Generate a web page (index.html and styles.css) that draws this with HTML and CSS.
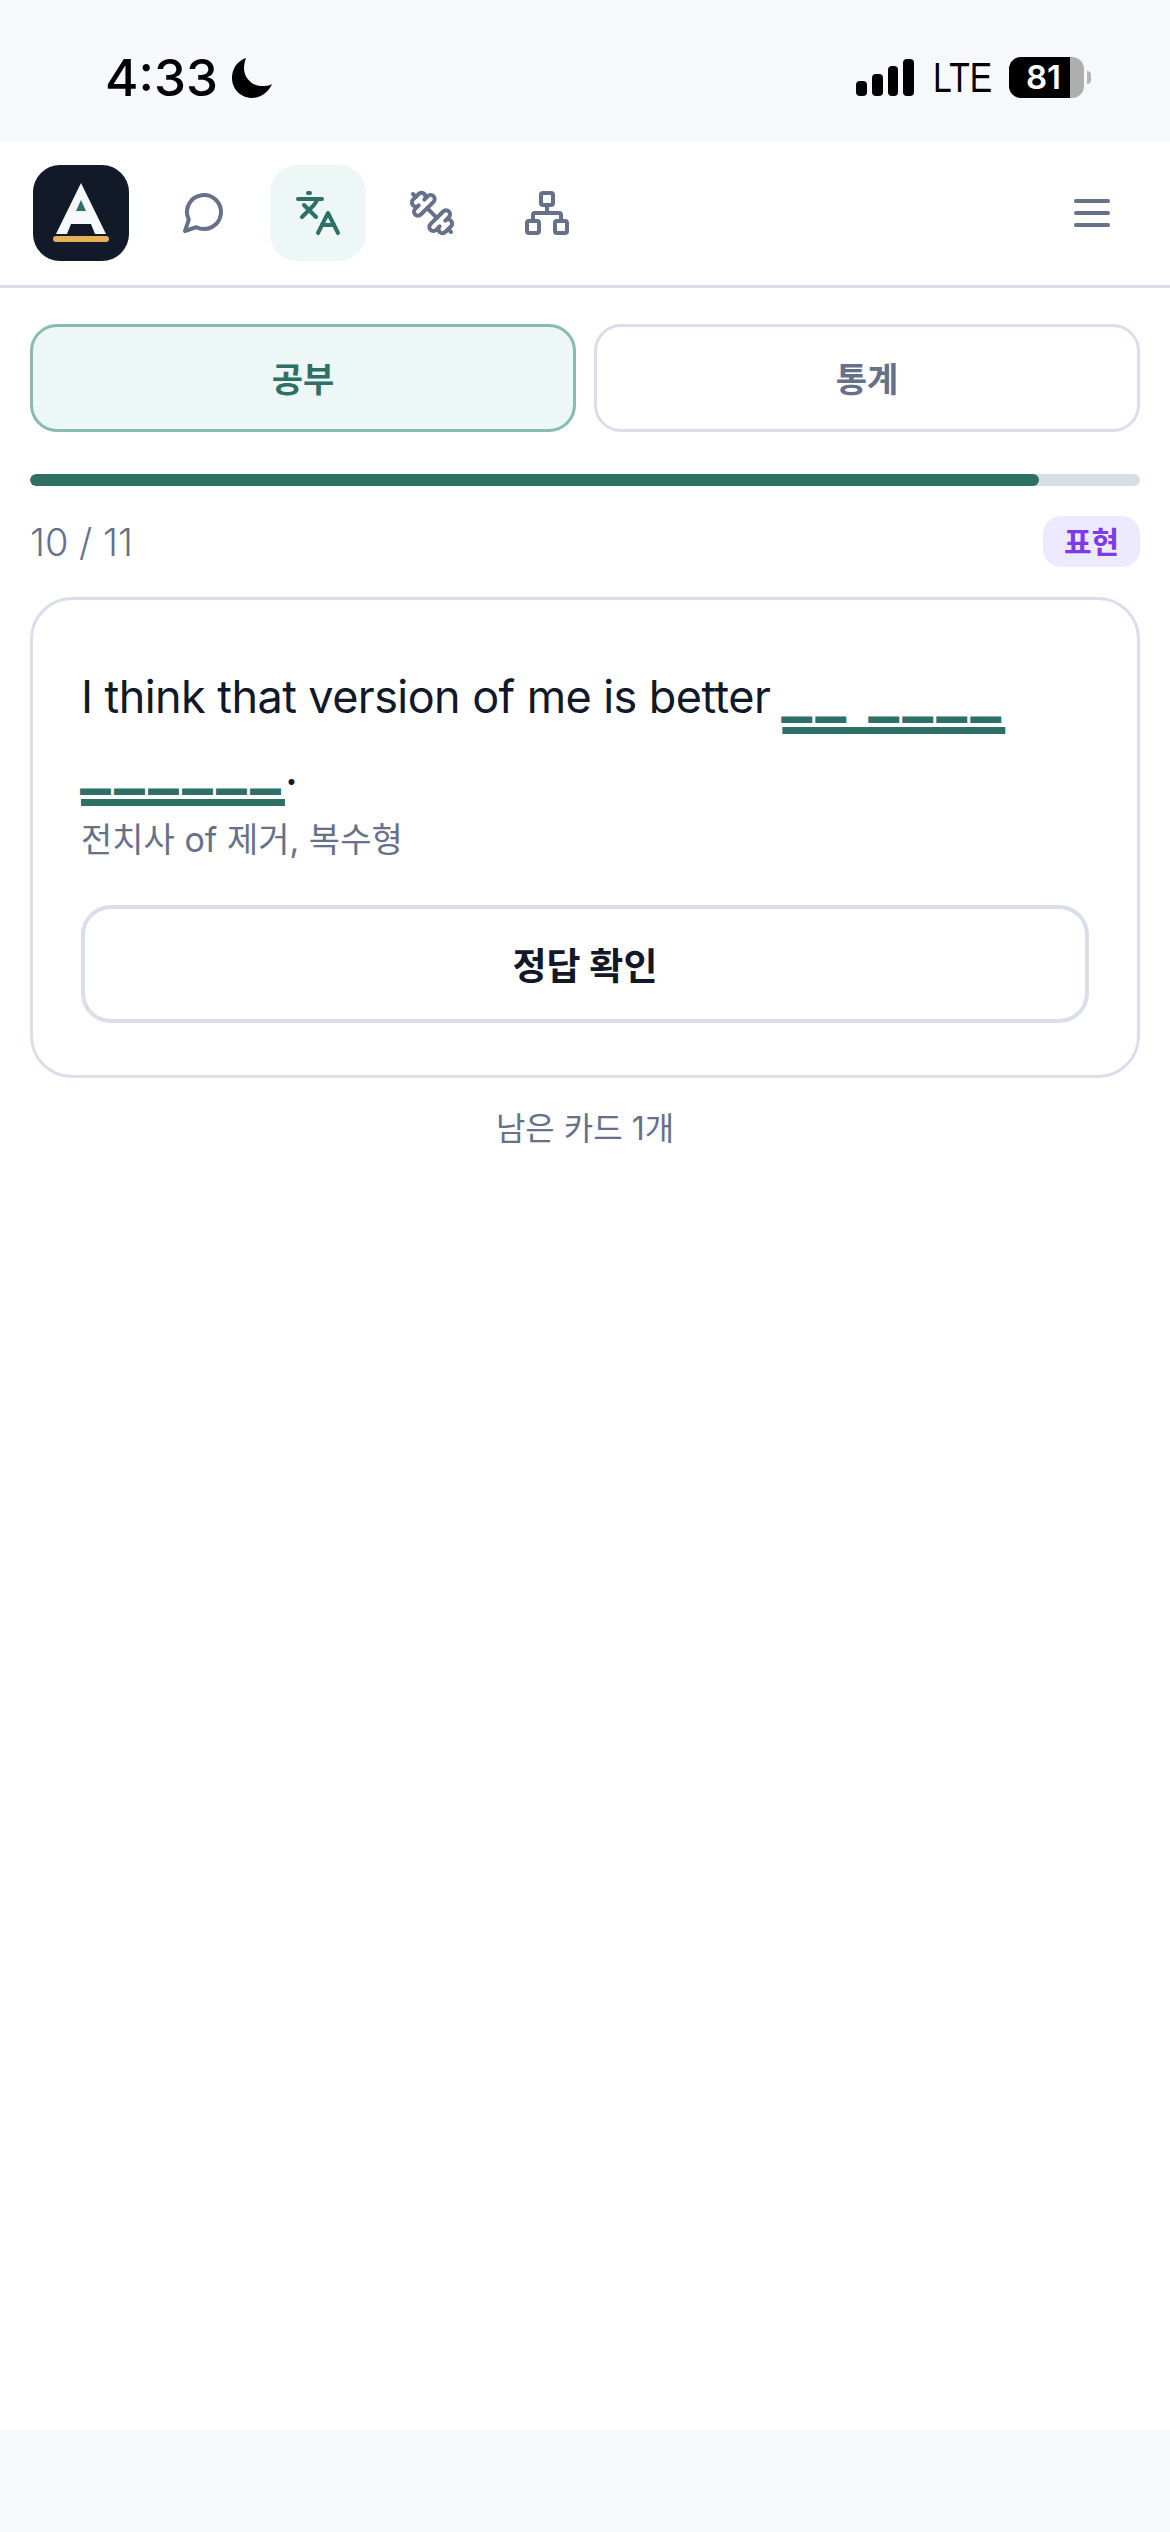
FILE: index.html
```html
<!DOCTYPE html>
<html lang="ko">
<head>
<meta charset="utf-8">
<title>공부</title>
<link rel="stylesheet" href="styles.css">
</head>
<body>
<div class="app">
  <header class="status">
    <div class="status-left">
      <span class="time">4:33</span>
      <svg class="moon" viewBox="0 0 40 40"><path d="M14 0C5 3 0 11 0 20c0 11 9 20 20 20 10 0 17-7 20-14-3 2-7 2-10 2-10 0-18-8-18-18 0-4 1-7 2-10z"/></svg>
    </div>
    <div class="status-right">
      <div class="signal"><i class="b1"></i><i class="b2"></i><i class="b3"></i><i class="b4"></i></div>
      <span class="lte">LTE</span>
      <div class="battery"><div class="battery-body"><span class="battery-num">81</span></div><div class="battery-nub"></div></div>
    </div>
  </header>

  <nav class="nav">
    <div class="nav-left">
      <div class="logo">
        <svg viewBox="0 0 96 96" width="96" height="96"><path class="logo-a" d="M48 18 73 69H62L58 59H38L34 69H23Z"/><path class="logo-t" d="M48 35l5 11H43z"/><rect class="logo-b" x="20" y="71" width="56" height="6" rx="3"/></svg>
      </div>
      <div class="nav-items">
        <div class="nav-btn">
          <svg class="ico" viewBox="0 0 24 24"><path d="m3 21 1.9-5.7a8.5 8.5 0 1 1 3.8 3.8z"/></svg>
        </div>
        <div class="nav-btn active">
          <svg class="ico" viewBox="0 0 24 24"><path d="m5 8 6 6"/><path d="m4 14 6-6 2-3"/><path d="M2 5h12"/><path d="M7 2h1"/><path d="m22 22-5-10-5 10"/><path d="M14 18h6"/></svg>
        </div>
        <div class="nav-btn">
          <svg class="ico" viewBox="0 0 24 24"><g transform="matrix(-1 0 0 1 24 0)"><path d="M17.596 12.768a2 2 0 1 0 2.829-2.829l-1.768-1.767a2 2 0 0 0 2.828-2.829l-2.828-2.828a2 2 0 0 0-2.829 2.828l-1.767-1.768a2 2 0 1 0-2.829 2.829z"/><path d="m2.5 21.5 1.4-1.4"/><path d="m20.1 3.9 1.4-1.4"/><path d="M5.343 21.485a2 2 0 1 0 2.829-2.828l1.767 1.768a2 2 0 1 0 2.829-2.829l-6.364-6.364a2 2 0 1 0-2.829 2.829l1.768 1.767a2 2 0 0 0-2.828 2.829z"/><path d="m9.6 14.4 4.8-4.8"/></g></svg>
        </div>
        <div class="nav-btn">
          <svg class="ico" viewBox="0 0 24 24"><rect x="16" y="16" width="6" height="6" rx="1"/><rect x="2" y="16" width="6" height="6" rx="1"/><rect x="9" y="2" width="6" height="6" rx="1"/><path d="M5 16v-3a1 1 0 0 1 1-1h12a1 1 0 0 1 1 1v3"/><path d="M12 12V8"/></svg>
        </div>
      </div>
    </div>
    <svg class="ico menu" viewBox="0 0 24 24"><path d="M4 6h16"/><path d="M4 12h16"/><path d="M4 18h16"/></svg>
  </nav>

  <main class="main">
    <div class="tabs">
      <div class="tab on">공부</div>
      <div class="tab">통계</div>
    </div>
    <div class="track"><div class="fill"></div></div>
    <div class="meta">
      <span class="count">10 / 11</span>
      <span class="badge">표현</span>
    </div>
    <section class="card">
      <p class="sentence">I think that version of me is better <span class="blank">__ ____ ______</span>.</p>
      <p class="hint">전치사 of 제거, 복수형</p>
      <div class="check">정답 확인</div>
    </section>
    <p class="remain">남은 카드 1개</p>
  </main>

  <footer class="bottom"></footer>
</div>
</body>
</html>
```
FILE: styles.css
```css
* { box-sizing: border-box; }
html, body { margin: 0; padding: 0; background: #fff; }
body { font-family: "Inter", "Noto Sans CJK KR", sans-serif; color: #111827; }
.app { display: flex; flex-direction: column; height: 2532px; }

.status { height: 141px; background: #f7f8fc; display: flex; justify-content: space-between; align-items: flex-start; padding: 57px 79px 0 105px; }
.status-left { display: flex; align-items: center; gap: 14px; }
.time { font-size: 51px; font-weight: 500; line-height: 41px; color: #000; }
.moon { width: 40px; height: 40px; display: block; fill: #000; }
.status-right { display: flex; align-items: center; height: 41px; }
.signal { display: flex; align-items: flex-end; gap: 5px; height: 37px; width: 58px; }
.signal i { display: block; width: 11px; background: #000; border-radius: 4px; }
.signal .b1 { height: 15px; }
.signal .b2 { height: 22px; }
.signal .b3 { height: 30px; }
.signal .b4 { height: 37px; }
.lte { font-family: "Liberation Sans", sans-serif; font-size: 42px; line-height: 41px; color: #000; margin-left: 19px; width: 57px; transform: scaleX(0.8); transform-origin: left center; }
.battery { display: flex; align-items: center; margin-left: 19px; gap: 3px; }
.battery-body { width: 75px; height: 41px; border-radius: 12px; background: linear-gradient(to right, #000 61px, #aeaeae 61px); color: #fff; display: flex; align-items: center; padding-left: 17px; }
.battery-num { font-size: 33px; font-weight: 600; line-height: 41px; }
.battery-nub { width: 4px; height: 13px; background: #b5b5b5; border-radius: 0 7px 7px 0; }

.nav { height: 147px; border-bottom: 3px solid #dadde9; display: flex; align-items: center; justify-content: space-between; padding: 0 54px 0 33px; }
.nav-left { display: flex; align-items: center; gap: 26px; }
.nav-items { display: flex; gap: 18.5px; }
.logo { width: 96px; height: 96px; border-radius: 27px; background: #121a2a; }
.logo svg { display: block; }
.logo-a { fill: #f7f8fc; }
.logo-t { fill: #2f7066; }
.logo-b { fill: #e4b155; }
.nav-btn { width: 96px; height: 96px; border-radius: 27px; display: flex; align-items: center; justify-content: center; color: #667189; }
.nav-btn.active { background: #edf7f5; color: #2f7066; }
.ico { width: 48px; height: 48px; fill: none; stroke: currentColor; stroke-width: 2; stroke-linecap: round; stroke-linejoin: round; display: block; }
.menu { color: #667189; }

.main { flex: 1; padding: 36px 30px 0; display: flex; flex-direction: column; }
.tabs { display: flex; gap: 18px; }
.tab { flex: 1; height: 108px; padding-bottom: 2px; border: 3px solid #d9dee9; border-radius: 27px; display: flex; align-items: center; justify-content: center; font-size: 34px; font-weight: 700; color: #667189; background: #fff; }
.tab.on { border-color: #88bbb0; background: #edf7f5; color: #2f7066; }
.track { height: 12px; margin-top: 42px; border-radius: 6px; background: #d9dde7; overflow: hidden; }
.fill { width: 90.91%; height: 100%; background: #2f7066; border-radius: 6px; }
.meta { display: flex; justify-content: space-between; align-items: center; margin-top: 30px; height: 51px; }
.count { font-size: 38px; color: #667189; font-weight: 300; }
.badge { width: 97px; height: 51px; padding-bottom: 4px; border-radius: 18px; background: #ede9fe; color: #7c3aed; font-size: 30px; font-weight: 700; display: flex; align-items: center; justify-content: center; }

.card { margin-top: 30px; height: 481px; border: 3px solid #d9dee9; border-radius: 42px; padding: 61px 48px 48px; }
.sentence { margin: 0; font-size: 45px; line-height: 72px; letter-spacing: -0.58px; color: #111827; }
.blank { font-family: "DejaVu Sans Mono", monospace; font-size: 48px; line-height: 1; font-weight: 700; color: #2f7066; -webkit-text-stroke: 2px #2f7066; letter-spacing: 5.1px; word-spacing: -15px; vertical-align: 2.5px; text-decoration: underline; text-decoration-color: #2f7066; text-decoration-thickness: 7px; text-underline-offset: 15.5px; text-decoration-skip-ink: none; }
.hint { margin: 11px 0 0; font-size: 34px; line-height: 48px; color: #667189; }
.check { margin-top: 41px; height: 118px; border: 4px solid #d9dee9; border-radius: 30px; display: flex; align-items: center; justify-content: center; font-size: 37px; font-weight: 700; color: #111827; }
.remain { margin: 30px 0 0; text-align: center; font-size: 32px; line-height: 42px; color: #667189; }

.bottom { height: 102px; background: #f7f8fc; }
```
